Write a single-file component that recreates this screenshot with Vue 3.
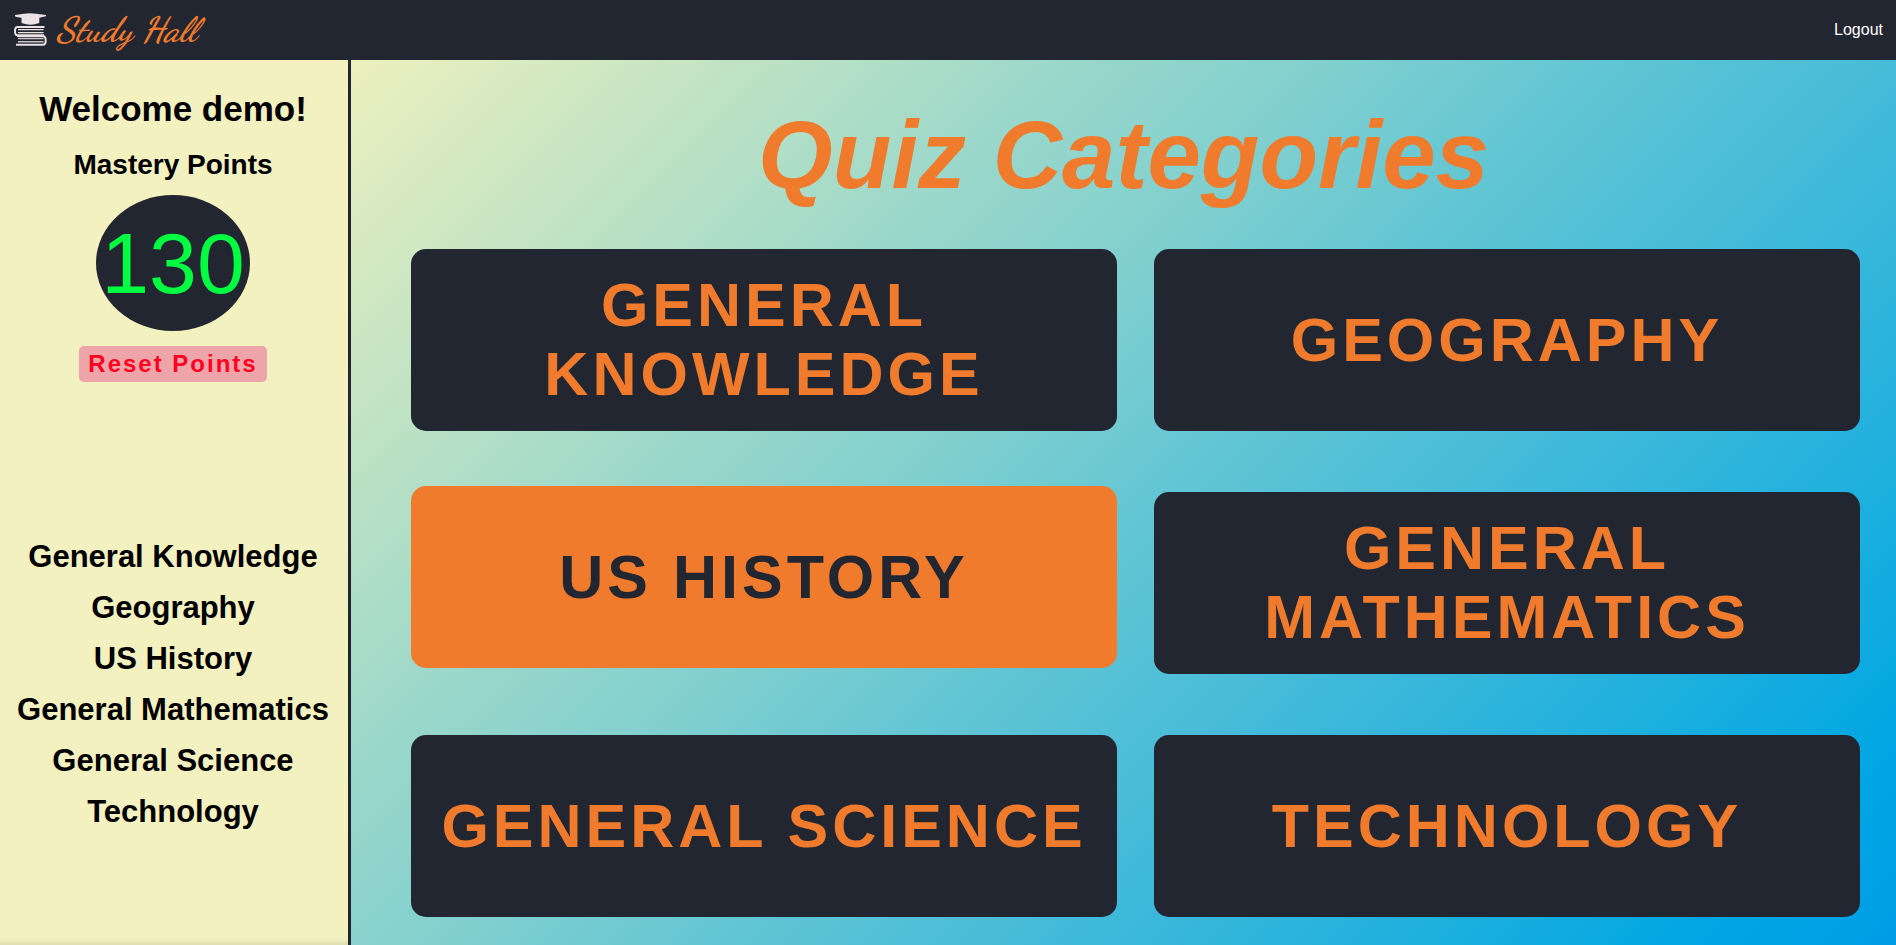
<script setup>
const categories = [
  { name: 'General Knowledge' },
  { name: 'Geography' },
  { name: 'US History', active: true },
  { name: 'General Mathematics' },
  { name: 'General Science' },
  { name: 'Technology' }
]
</script>

<template>
  <div class="page">
    <header class="topbar">
      <a class="brand" href="#">
        <svg class="logo" viewBox="0 0 34 34" aria-hidden="true">
          <path d="M1 2 L10 0.8 Q16 -0.500 22 0.800 L32 2 V3.200 L25.300 4.800 V10 Q16.500 13.300 7.500 10 V4.800 L2.500 4 L1 3.200 Z" fill="#ece2e3" />
          <g fill="none" stroke="#ece2e3">
            <path d="M30.500 14 H3.500 Q1 14 1 18 Q1 22.300 3.500 22.300 H30" stroke-width="2" />
            <path d="M4 16.600 H29.500 M4 19.600 H29.500" stroke-width="1.300" />
            <path d="M3 23 H29 Q31.700 23.500 31.700 27.500 Q31.700 31.800 29 31.800 H2" stroke-width="2" />
            <path d="M4 25.600 H29.500 M4 28.800 H29.500" stroke-width="1.500" opacity="0.85" />
          </g>
        </svg>
        <span class="brand-name">Study Hall</span>
      </a>
      <a class="logout" href="#">Logout</a>
    </header>

    <div class="body">
      <aside class="sidebar">
        <h2 class="welcome">Welcome demo!</h2>
        <h3 class="mastery">Mastery Points</h3>
        <div class="points">130</div>
        <button class="reset" type="button">Reset Points</button>
        <nav class="links">
          <a v-for="c in categories" :key="c.name" href="#">{{ c.name }}</a>
        </nav>
      </aside>

      <main class="content">
        <h1 class="title">Quiz Categories</h1>
        <div class="grid">
          <button
            v-for="c in categories"
            :key="c.name"
            type="button"
            class="card"
            :class="{ active: c.active }"
          >{{ c.name }}</button>
        </div>
      </main>
    </div>
  </div>
</template>

<style>
body {
  margin: 0;
}
</style>

<style scoped>
.page {
  display: flex;
  flex-direction: column;
  min-height: 100vh;
  font-family: "Liberation Sans", Helvetica, Arial, sans-serif;
}
.topbar {
  display: flex;
  align-items: center;
  justify-content: space-between;
  height: 60px;
  padding: 0 13px 0 14px;
  background: #222630;
}
.brand {
  display: flex;
  align-items: center;
  gap: 8px;
  text-decoration: none;
}
.logo {
  width: 34px;
  height: 34px;
}
.brand-name {
  color: #f07b2c;
  font-family: "Dancing Script", "Brush Script MT", cursive;
  font-size: 35px;
  font-style: italic;
  font-weight: bold;
  line-height: 40px;
}
.logout {
  color: #fff;
  font-size: 16px;
  text-decoration: none;
}
.body {
  display: flex;
  flex: 1;
}
.sidebar {
  display: flex;
  flex-direction: column;
  align-items: center;
  box-sizing: border-box;
  flex: 0 0 351px;
  padding: 28px 2px 0 0;
  border-right: 3px solid #222630;
  background: #f3f1bf;
  box-shadow: inset 0 -10px 10px -10px rgba(0, 0, 0, 0.15);
  color: #000;
}
.welcome {
  margin: 0;
  font-size: 35px;
  line-height: 42px;
}
.mastery {
  margin: 18px 0 13px;
  font-size: 28px;
  line-height: 34px;
}
.points {
  width: 154px;
  height: 136px;
  border-radius: 50%;
  background: #222630;
  color: #00ff40;
  font-size: 86px;
  line-height: 136px;
  text-align: center;
}
.reset {
  margin-top: 15px;
  padding: 0 9px;
  border: 0;
  border-radius: 5px;
  background: #eea5aa;
  color: #ff0022;
  font-family: inherit;
  font-size: 24px;
  font-weight: bold;
  letter-spacing: 2px;
  line-height: 36px;
}
.links {
  display: flex;
  flex-direction: column;
  align-items: center;
  gap: 15px;
  margin-top: 157px;
}
.links a {
  color: #000;
  font-size: 31px;
  font-weight: bold;
  line-height: 36px;
  text-decoration: none;
}
.content {
  flex: 1;
  padding: 40px 0 28px;
  background: linear-gradient(135deg, #edf0be 0%, #c0e3c4 16%, #9cd8ca 29%, #7fcfcf 41%, #5ec4d4 53%, #45bbd9 64%, #1eb0de 80%, #00a6e3 92%, #009de7 100%);
}
.title {
  margin: 0 0 39px;
  color: #f07b2c;
  font-size: 96px;
  font-style: italic;
  line-height: 110px;
  text-align: center;
}
.grid {
  display: grid;
  grid-template-columns: 1fr 1fr;
  gap: 61px 37px;
  padding: 0 36px 0 60px;
}
.card {
  min-height: 182px;
  padding: 20px;
  border: 0;
  border-radius: 15px;
  background: #222630;
  color: #f07b2c;
  font-family: inherit;
  font-size: 61px;
  font-weight: bold;
  letter-spacing: 4px;
  line-height: 69px;
  text-transform: uppercase;
}
.card.active {
  background: #f07b2c;
  color: #222630;
  transform: translateY(-6px);
}
</style>
